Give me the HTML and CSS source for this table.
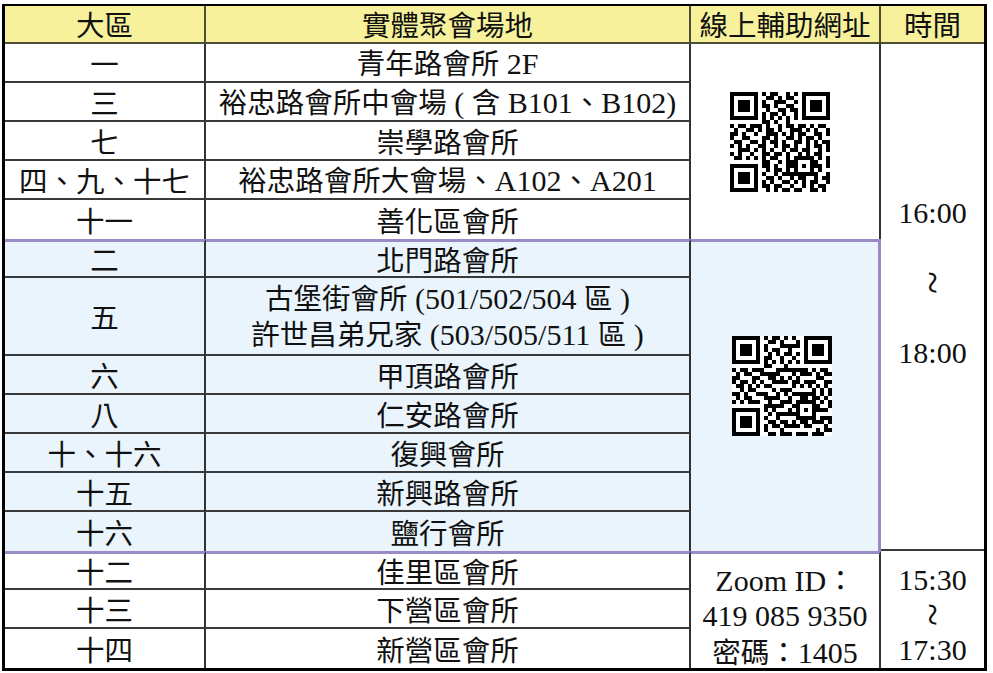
FILE: index.html
```html
<!DOCTYPE html>
<html lang="zh-Hant">
<head>
<meta charset="utf-8">
<title>聚會場地</title>
<link rel="stylesheet" href="styles.css">
</head>
<body>
<div class="sheet">
  <div class="cell head">大區</div>
  <div class="cell head">實體聚會場地</div>
  <div class="cell head">線上輔助網址</div>
  <div class="cell head last">時間</div>

  <div class="cell qr qr1">
    <svg class="qrcode" viewBox="0 0 25 25" width="100" height="100" shape-rendering="crispEdges">
      <path fill-rule="evenodd" d="M0 0h7v7h-7z M1 1v5h5v-5z M2 2h3v3h-3z M18 0h7v7h-7z M19 1v5h5v-5z M20 2h3v3h-3z M0 18h7v7h-7z M1 19v5h5v-5z M2 20h3v3h-3z"/>
      <path d="M8 0h1v1h-1z M10 0h2v1h-2z M14 0h1v1h-1z M16 0h1v1h-1z
M9 1h2v1h-2z M12 1h1v1h-1z M14 1h2v1h-2z
M8 2h1v1h-1z M11 2h3v1h-3z M16 2h1v1h-1z
M8 3h2v1h-2z M11 3h1v1h-1z M14 3h2v1h-2z
M9 4h1v1h-1z M12 4h2v1h-2z M15 4h2v1h-2z
M8 5h1v1h-1z M10 5h2v1h-2z M13 5h1v1h-1z M16 5h1v1h-1z
M8 6h1v1h-1z M10 6h1v1h-1z M12 6h1v1h-1z M14 6h1v1h-1z M16 6h1v1h-1z
M8 7h2v1h-2z M11 7h1v1h-1z M14 7h1v1h-1z
M0 8h1v1h-1z M2 8h2v1h-2z M5 8h3v1h-3z M9 8h1v1h-1z M12 8h1v1h-1z M14 8h2v1h-2z M17 8h2v1h-2z M20 8h1v1h-1z M22 8h2v1h-2z
M1 9h1v1h-1z M4 9h2v1h-2z M7 9h1v1h-1z M9 9h2v1h-2z M12 9h1v1h-1z M15 9h3v1h-3z M19 9h1v1h-1z M21 9h1v1h-1z M24 9h1v1h-1z
M0 10h2v1h-2z M3 10h1v1h-1z M6 10h1v1h-1z M9 10h3v1h-3z M13 10h1v1h-1z M15 10h1v1h-1z M17 10h2v1h-2z M21 10h2v1h-2z M24 10h1v1h-1z
M0 11h1v1h-1z M3 11h2v1h-2z M8 11h2v1h-2z M11 11h1v1h-1z M14 11h2v1h-2z M17 11h1v1h-1z M19 11h2v1h-2z M22 11h1v1h-1z
M1 12h2v1h-2z M5 12h2v1h-2z M8 12h1v1h-1z M10 12h2v1h-2z M13 12h1v1h-1z M16 12h2v1h-2z M19 12h1v1h-1z M21 12h1v1h-1z M23 12h2v1h-2z
M0 13h1v1h-1z M2 13h1v1h-1z M4 13h1v1h-1z M7 13h2v1h-2z M11 13h1v1h-1z M13 13h2v1h-2z M16 13h1v1h-1z M19 13h1v1h-1z M21 13h2v1h-2z M24 13h1v1h-1z
M2 14h3v1h-3z M6 14h1v1h-1z M8 14h1v1h-1z M10 14h1v1h-1z M13 14h1v1h-1z M15 14h2v1h-2z M18 14h2v1h-2z M22 14h1v1h-1z M24 14h1v1h-1z
M0 15h1v1h-1z M2 15h1v1h-1z M5 15h1v1h-1z M8 15h2v1h-2z M11 15h2v1h-2z M14 15h1v1h-1z M17 15h1v1h-1z M19 15h1v1h-1z M21 15h2v1h-2z
M1 16h2v1h-2z M4 16h1v1h-1z M6 16h1v1h-1z M8 16h1v1h-1z M10 16h2v1h-2z M14 16h1v1h-1z M16 16h5v1h-5z M22 16h1v1h-1z M24 16h1v1h-1z
M8 17h2v1h-2z M12 17h1v1h-1z M14 17h3v1h-3z M20 17h2v1h-2z M24 17h1v1h-1z
M8 18h2v1h-2z M11 18h1v1h-1z M14 18h3v1h-3z M18 18h1v1h-1z M20 18h3v1h-3z M24 18h1v1h-1z
M9 19h1v1h-1z M11 19h2v1h-2z M14 19h1v1h-1z M16 19h1v1h-1z M20 19h1v1h-1z M22 19h1v1h-1z
M8 20h1v1h-1z M11 20h1v1h-1z M13 20h9v1h-9z M24 20h1v1h-1z
M9 21h2v1h-2z M12 21h1v1h-1z M15 21h1v1h-1z M17 21h2v1h-2z M21 21h1v1h-1z M23 21h2v1h-2z
M8 22h1v1h-1z M10 22h1v1h-1z M13 22h2v1h-2z M16 22h1v1h-1z M18 22h1v1h-1z M20 22h2v1h-2z M24 22h1v1h-1z
M8 23h2v1h-2z M11 23h2v1h-2z M15 23h1v1h-1z M18 23h1v1h-1z M20 23h1v1h-1z M22 23h2v1h-2z
M9 24h1v1h-1z M11 24h1v1h-1z M13 24h2v1h-2z M16 24h2v1h-2z M20 24h2v1h-2z M23 24h1v1h-1z"/>
    </svg>
  </div>
  <div class="cell time time1">
    <span class="t">16:00</span>
    <span class="wave">~</span>
    <span class="t">18:00</span>
  </div>

  <div class="cell">一</div>
  <div class="cell"><span class="line">青年路會所<span class="t"> 2F</span></span></div>
  <div class="cell">三</div>
  <div class="cell"><span class="line">裕忠路會所中會場<span class="t"> ( </span>含<span class="t"> B101</span>、<span class="t">B102)</span></span></div>
  <div class="cell">七</div>
  <div class="cell">崇學路會所</div>
  <div class="cell">四、九、十七</div>
  <div class="cell"><span class="line">裕忠路會所大會場、<span class="t">A102</span>、<span class="t">A201</span></span></div>
  <div class="cell nobottom">十一</div>
  <div class="cell nobottom">善化區會所</div>

  <div class="cell qr qr2">
    <svg class="qrcode" viewBox="0 0 25 25" width="100" height="100" shape-rendering="crispEdges">
      <path fill-rule="evenodd" d="M0 0h7v7h-7z M1 1v5h5v-5z M2 2h3v3h-3z M18 0h7v7h-7z M19 1v5h5v-5z M20 2h3v3h-3z M0 18h7v7h-7z M1 19v5h5v-5z M2 20h3v3h-3z"/>
      <path d="M0 8h1v1h-1z M0 10h1v2h-1z M0 14h1v1h-1z M0 16h1v1h-1z
M1 9h1v2h-1z M1 12h1v1h-1z M1 14h1v2h-1z
M2 8h1v1h-1z M2 11h1v3h-1z M2 16h1v1h-1z
M3 8h1v2h-1z M3 11h1v1h-1z M3 14h1v2h-1z
M4 9h1v1h-1z M4 12h1v2h-1z M4 15h1v2h-1z
M5 8h1v1h-1z M5 10h1v2h-1z M5 13h1v1h-1z M5 16h1v1h-1z
M6 8h1v1h-1z M6 10h1v1h-1z M6 12h1v1h-1z M6 14h1v1h-1z M6 16h1v1h-1z
M7 8h1v2h-1z M7 11h1v1h-1z M7 14h1v1h-1z
M8 0h1v1h-1z M8 2h1v2h-1z M8 5h1v3h-1z M8 9h1v1h-1z M8 12h1v1h-1z M8 14h1v2h-1z M8 17h1v2h-1z M8 20h1v1h-1z M8 22h1v2h-1z
M9 1h1v1h-1z M9 4h1v2h-1z M9 7h1v1h-1z M9 9h1v2h-1z M9 12h1v1h-1z M9 15h1v3h-1z M9 19h1v1h-1z M9 21h1v1h-1z M9 24h1v1h-1z
M10 0h1v2h-1z M10 3h1v1h-1z M10 6h1v1h-1z M10 9h1v3h-1z M10 13h1v1h-1z M10 15h1v1h-1z M10 17h1v2h-1z M10 21h1v2h-1z M10 24h1v1h-1z
M11 0h1v1h-1z M11 3h1v2h-1z M11 8h1v2h-1z M11 11h1v1h-1z M11 14h1v2h-1z M11 17h1v1h-1z M11 19h1v2h-1z M11 22h1v1h-1z
M12 1h1v2h-1z M12 5h1v2h-1z M12 8h1v1h-1z M12 10h1v2h-1z M12 13h1v1h-1z M12 16h1v2h-1z M12 19h1v1h-1z M12 21h1v1h-1z M12 23h1v2h-1z
M13 0h1v1h-1z M13 2h1v1h-1z M13 4h1v1h-1z M13 7h1v2h-1z M13 11h1v1h-1z M13 13h1v2h-1z M13 16h1v1h-1z M13 19h1v1h-1z M13 21h1v2h-1z M13 24h1v1h-1z
M14 2h1v3h-1z M14 6h1v1h-1z M14 8h1v1h-1z M14 10h1v1h-1z M14 13h1v1h-1z M14 15h1v2h-1z M14 18h1v2h-1z M14 22h1v1h-1z M14 24h1v1h-1z
M15 0h1v1h-1z M15 2h1v1h-1z M15 5h1v1h-1z M15 8h1v2h-1z M15 11h1v2h-1z M15 14h1v1h-1z M15 17h1v1h-1z M15 19h1v1h-1z M15 21h1v2h-1z
M16 1h1v2h-1z M16 4h1v1h-1z M16 6h1v1h-1z M16 8h1v1h-1z M16 10h1v2h-1z M16 14h1v1h-1z M16 16h1v5h-1z M16 22h1v1h-1z M16 24h1v1h-1z
M17 8h1v2h-1z M17 12h1v1h-1z M17 14h1v3h-1z M17 20h1v2h-1z M17 24h1v1h-1z
M18 8h1v2h-1z M18 11h1v1h-1z M18 14h1v3h-1z M18 18h1v1h-1z M18 20h1v3h-1z M18 24h1v1h-1z
M19 9h1v1h-1z M19 11h1v2h-1z M19 14h1v1h-1z M19 16h1v1h-1z M19 20h1v1h-1z M19 22h1v1h-1z
M20 8h1v1h-1z M20 11h1v1h-1z M20 13h1v9h-1z M20 24h1v1h-1z
M21 9h1v2h-1z M21 12h1v1h-1z M21 15h1v1h-1z M21 17h1v2h-1z M21 21h1v1h-1z M21 23h1v2h-1z
M22 8h1v1h-1z M22 10h1v1h-1z M22 13h1v2h-1z M22 16h1v1h-1z M22 18h1v1h-1z M22 20h1v2h-1z M22 24h1v1h-1z
M23 8h1v2h-1z M23 11h1v2h-1z M23 15h1v1h-1z M23 18h1v1h-1z M23 20h1v1h-1z M23 22h1v2h-1z
M24 9h1v1h-1z M24 11h1v1h-1z M24 13h1v2h-1z M24 16h1v2h-1z M24 20h1v2h-1z M24 23h1v1h-1z"/>
    </svg>
  </div>

  <div class="cell blue top">二</div>
  <div class="cell blue top">北門路會所</div>
  <div class="cell blue">五</div>
  <div class="cell blue two">
    <span class="line">古堡街會所<span class="t"> (501/502/504 </span>區<span class="t"> )</span></span>
    <span class="line">許世昌弟兄家<span class="t"> (503/505/511 </span>區<span class="t"> )</span></span>
  </div>
  <div class="cell blue">六</div>
  <div class="cell blue">甲頂路會所</div>
  <div class="cell blue">八</div>
  <div class="cell blue">仁安路會所</div>
  <div class="cell blue">十、十六</div>
  <div class="cell blue">復興會所</div>
  <div class="cell blue">十五</div>
  <div class="cell blue">新興路會所</div>
  <div class="cell blue nobottom">十六</div>
  <div class="cell blue nobottom">鹽行會所</div>

  <div class="cell zoom top">
    <span class="line"><span class="t">Zoom ID</span>：</span>
    <span class="line t">419 085 9350</span>
    <span class="line">密碼：<span class="t">1405</span></span>
  </div>
  <div class="cell time time2 nobottom">
    <span class="t">15:30</span>
    <span class="wave">~</span>
    <span class="t">17:30</span>
  </div>

  <div class="cell top">十二</div>
  <div class="cell top">佳里區會所</div>
  <div class="cell">十三</div>
  <div class="cell">下營區會所</div>
  <div class="cell nobottom">十四</div>
  <div class="cell nobottom">新營區會所</div>
</div>
</body>
</html>
```

FILE: styles.css
```css
html, body {
  margin: 0;
  padding: 0;
  background: #ffffff;
}

.sheet {
  margin: 4px 0 0 2px;
  width: 985px;
  height: 667px;
  box-sizing: border-box;
  border: 3px solid #000000;
  border-top-width: 2px;
  display: grid;
  grid-template-columns: 201px 485px 190px 103px;
  grid-template-rows: 38px repeat(6, 39px) 78px repeat(5, 39px) repeat(3, 39px);
  font-family: "Noto Sans CJK TC", "Noto Sans CJK SC", sans-serif;
  font-size: 28.5px;
  line-height: 34px;
  color: #111111;
}

.cell {
  box-sizing: border-box;
  display: flex;
  align-items: center;
  justify-content: center;
  text-align: center;
  white-space: nowrap;
  border-right: 2px solid #333333;
  border-bottom: 2px solid #3a3a3a;
  background: #ffffff;
}

.line {
  display: block;
}

.cell.last,
.time {
  border-right: none;
}

.head {
  background: #f7f19c;
  border-bottom-color: #4d4d38;
  border-right-color: #4d4d38;
}

.nobottom {
  border-bottom: none;
}

.blue {
  background: #e9f4fc;
}

.top {
  border-top: 3px solid #9a8bc6;
}

.two {
  flex-direction: column;
}

.t {
  font-family: "Liberation Serif", "Times New Roman", serif;
  font-size: 30px;
}

.qr1 {
  grid-area: 2 / 3 / 7 / 4;
  border-bottom: none;
  padding-right: 10px;
}

.qr2 {
  grid-area: 7 / 3 / 14 / 4;
  background: #e9f4fc;
  border-top: 3px solid #9a8bc6;
  border-right: 3px solid #9a8bc6;
  border-bottom: none;
  padding: 0 6px 22px 0;
}

.qrcode {
  display: block;
  background: #ffffff;
}

.time {
  flex-direction: column;
  line-height: 35px;
}

.time1 {
  grid-area: 2 / 4 / 14 / 5;
  gap: 35px;
  padding-bottom: 29px;
}

.time2 {
  grid-area: 14 / 4 / 17 / 5;
  padding-top: 9px;
}

.wave {
  display: block;
  font-family: "Liberation Serif", serif;
  font-size: 42px;
  line-height: 35px;
  height: 35px;
  transform: rotate(90deg) scaleY(1.05);
}

.zoom {
  grid-area: 14 / 3 / 17 / 4;
  flex-direction: column;
  line-height: 35px;
  padding-top: 8px;
  border-bottom: none;
}
```
